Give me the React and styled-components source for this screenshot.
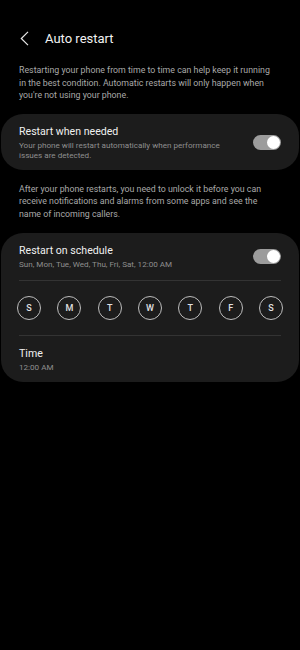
import React from "react";
import styled, { createGlobalStyle } from "styled-components";

const GlobalStyle = createGlobalStyle`
  html, body {
    margin: 0;
    padding: 0;
    background: #000;
  }
  body {
    font-family: Roboto, "Noto Sans", sans-serif;
    -webkit-font-smoothing: antialiased;
  }
`;

const days = ["S", "M", "T", "W", "T", "F", "S"];

const Page = styled.div`
  width: 300px;
  min-height: 650px;
  background: #000;
  color: #fff;
  padding: 0 1px;
  box-sizing: border-box;
`;

const Header = styled.header`
  display: flex;
  align-items: center;
  height: 38px;
  padding: 19px 0 0 19px;
  gap: 16px;
`;

const BackButton = styled.div`
  display: flex;
  align-items: center;
  width: 9px;
  height: 16px;
`;

const Title = styled.h1`
  margin: 0;
  font-size: 13px;
  font-weight: 400;
  color: #f2f2f2;
`;

const Note = styled.p`
  margin: 0;
  padding: 0 26px 0 18px;
  font-size: 8.8px;
  line-height: 12.5px;
  color: #a9a9a9;
`;

const Card = styled.section`
  background: #1c1c1c;
  border-radius: 22px;
  padding: 0 18px;
`;

const Row = styled.div`
  display: flex;
  align-items: center;
  justify-content: space-between;
  padding: ${(p) => p.$pad || "0"};
`;

const TextBlock = styled.div`
  display: flex;
  flex-direction: column;
  max-width: ${(p) => p.$max || "none"};
`;

const ItemTitle = styled.div`
  font-size: 10.6px;
  line-height: 14px;
  color: #f0f0f0;
`;

const ItemSub = styled.div`
  font-size: 8.1px;
  line-height: 10px;
  color: #8f8f8f;
  margin-top: 1px;
`;

const Toggle = styled.div`
  width: 28px;
  height: 15px;
  border-radius: 8px;
  background: #9c9c9c;
  display: flex;
  align-items: center;
  justify-content: flex-end;
  padding: 0 1px;
  box-sizing: border-box;
  flex-shrink: 0;
`;

const Knob = styled.div`
  width: 13px;
  height: 13px;
  border-radius: 50%;
  background: #fff;
`;

const Divider = styled.div`
  height: 1px;
  background: #333;
`;

const DayRow = styled.div`
  display: flex;
  justify-content: space-between;
  padding: 15px 0;
  margin: 0 -2px;
`;

const DayCircle = styled.div`
  width: 24px;
  height: 24px;
  box-sizing: border-box;
  border: 1px solid #bdbdbd;
  border-radius: 50%;
  display: flex;
  align-items: center;
  justify-content: center;
  font-size: 9px;
  font-weight: 500;
  color: #e0e0e0;
`;

const Spacer = styled.div`
  height: ${(p) => p.$h}px;
`;

function Switch() {
  return (
    <Toggle>
      <Knob />
    </Toggle>
  );
}

export default function App() {
  return (
    <Page>
      <GlobalStyle />
      <Header>
        <BackButton>
          <svg width="9" height="15" viewBox="0 0 9 15">
            <path d="M8 0.8 L1.3 7.5 L8 14.2" fill="none" stroke="#e8e8e8" strokeWidth="1.2" />
          </svg>
        </BackButton>
        <Title>Auto restart</Title>
      </Header>
      <Spacer $h={7} />
      <Note>
        Restarting your phone from time to time can help keep it running in the best condition.
        Automatic restarts will only happen when you're not using your phone.
      </Note>
      <Spacer $h={12} />
      <Card>
        <Row $pad="11px 0 10px">
          <TextBlock $max="210px">
            <ItemTitle>Restart when needed</ItemTitle>
            <ItemSub>Your phone will restart automatically when performance issues are detected.</ItemSub>
          </TextBlock>
          <Switch />
        </Row>
      </Card>
      <Spacer $h={13} />
      <Note>
        After your phone restarts, you need to unlock it before you can receive notifications and
        alarms from some apps and see the name of incoming callers.
      </Note>
      <Spacer $h={13} />
      <Card>
        <Row $pad="11px 0 11px">
          <TextBlock>
            <ItemTitle>Restart on schedule</ItemTitle>
            <ItemSub>Sun, Mon, Tue, Wed, Thu, Fri, Sat, 12:00 AM</ItemSub>
          </TextBlock>
          <Switch />
        </Row>
        <Divider />
        <DayRow>
          {days.map((d, i) => (
            <DayCircle key={i}>{d}</DayCircle>
          ))}
        </DayRow>
        <Divider />
        <Row $pad="11px 0 10px">
          <TextBlock>
            <ItemTitle>Time</ItemTitle>
            <ItemSub>12:00 AM</ItemSub>
          </TextBlock>
        </Row>
      </Card>
    </Page>
  );
}
